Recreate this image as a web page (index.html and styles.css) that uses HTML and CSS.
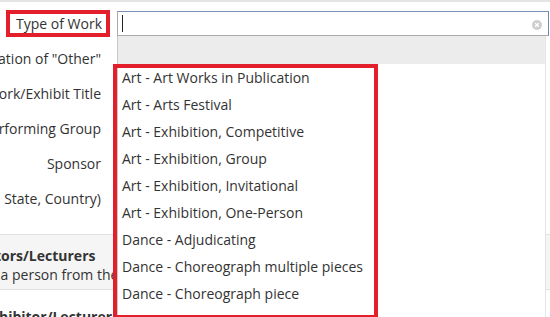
FILE: index.html
```html
<!DOCTYPE html>
<html lang="en">
<head>
  <meta charset="UTF-8" />
  <title>Creative Work</title>
  <link rel="stylesheet" href="styles.css">
</head>
<body>
  <div class="form">
    <div class="row">
      <label class="label"><span class="mark-label">Type of Work</span></label>
      <div class="field">
        <div class="select-box">
          <span class="caret"></span>
          <svg class="clear" width="10" height="10" viewBox="0 0 10 10">
            <circle cx="5" cy="5" r="5" fill="#cfcfcf"/>
            <path d="M3.2 3.2 L6.8 6.8 M6.8 3.2 L3.2 6.8" stroke="#fff" stroke-width="1.3"/>
          </svg>
        </div>
      </div>
    </div>
    <div class="row">
      <label class="label">Explanation of "Other"</label>
      <div class="field"></div>
    </div>
    <div class="row">
      <label class="label">Work/Exhibit Title</label>
      <div class="field"></div>
    </div>
    <div class="row">
      <label class="label">Performing Group</label>
      <div class="field"></div>
    </div>
    <div class="row">
      <label class="label">Sponsor</label>
      <div class="field"></div>
    </div>
    <div class="row">
      <label class="label">Location (City, State, Country)</label>
      <div class="field"></div>
    </div>

    <div class="section">
      <div class="section-title">Creators/Lecturers</div>
      <div class="section-text">Add a person from the list below</div>
    </div>

    <div class="person">Exhibitor/Lecturer</div>
  </div>

  <div class="dropdown">
    <div class="dropdown-search"></div>
    <ul class="options">
      <li>Art - Art Works in Publication</li>
      <li>Art - Arts Festival</li>
      <li>Art - Exhibition, Competitive</li>
      <li>Art - Exhibition, Group</li>
      <li>Art - Exhibition, Invitational</li>
      <li>Art - Exhibition, One-Person</li>
      <li>Dance - Adjudicating</li>
      <li>Dance - Choreograph multiple pieces</li>
      <li>Dance - Choreograph piece</li>
    </ul>
  </div>
  <div class="mark-list"></div>
</body>
</html>
```

FILE: styles.css
```css
html, body {
  margin: 0;
  height: 100%;
  overflow: hidden;
}

body {
  font-family: "Open Sans", sans-serif;
  font-size: 14px;
  color: #333;
  background: #fff;
  border-top: 2px solid #e4e4e4;
  position: relative;
}

.form {
  margin-left: -150px;
  padding-top: 9px;
}

.row {
  display: flex;
  align-items: center;
  gap: 16px;
  height: 25px;
  margin-bottom: 10px;
}

.label {
  width: 251px;
  flex: none;
  display: flex;
  justify-content: flex-end;
  white-space: nowrap;
}

.mark-label {
  border: 4px solid #e21f2b;
  padding: 0 4px 0 6px;
  line-height: 19px;
  margin-right: -9px;
}

.field {
  width: 432px;
  flex: none;
  height: 25px;
}

.select-box {
  box-sizing: border-box;
  height: 25px;
  border: 1px solid #aaa;
  border-top-color: #7890b8;
  border-right-color: #6f86ae;
  display: flex;
  align-items: center;
  justify-content: space-between;
  padding: 0 6px 0 4px;
}

.caret {
  width: 1px;
  height: 17px;
  background: #222;
}

.clear {
  margin-top: 3px;
}

.section {
  margin-top: 23px;
  background: #f5f5f5;
  border-top: 1px solid #e2e2e2;
  border-bottom: 1px solid #e2e2e2;
  padding: 11px 0 6px 121px;
  height: 37px;
}

.section-title {
  font-weight: bold;
  line-height: 19px;
  text-indent: -8px;
}

.section-text {
  line-height: 20px;
}

.person {
  font-weight: bold;
  padding: 17px 0 0 133px;
}

.dropdown {
  position: absolute;
  left: 117px;
  top: 34px;
  width: 429px;
  bottom: 0;
  box-sizing: border-box;
  background: #fff;
  border-left: 1px solid #c8c8c8;
  border-right: 1px solid #e6e6e6;
}

.dropdown-search {
  height: 28px;
  background: #ececec;
}

.options {
  list-style: none;
  margin: 0;
  padding: 0;
}

.options li {
  height: 27px;
  line-height: 27px;
  padding-left: 4px;
  white-space: nowrap;
}

.mark-list {
  position: absolute;
  left: 113px;
  top: 62px;
  width: 265px;
  height: 255px;
  box-sizing: border-box;
  border: 4px solid #e21f2b;
}
```
